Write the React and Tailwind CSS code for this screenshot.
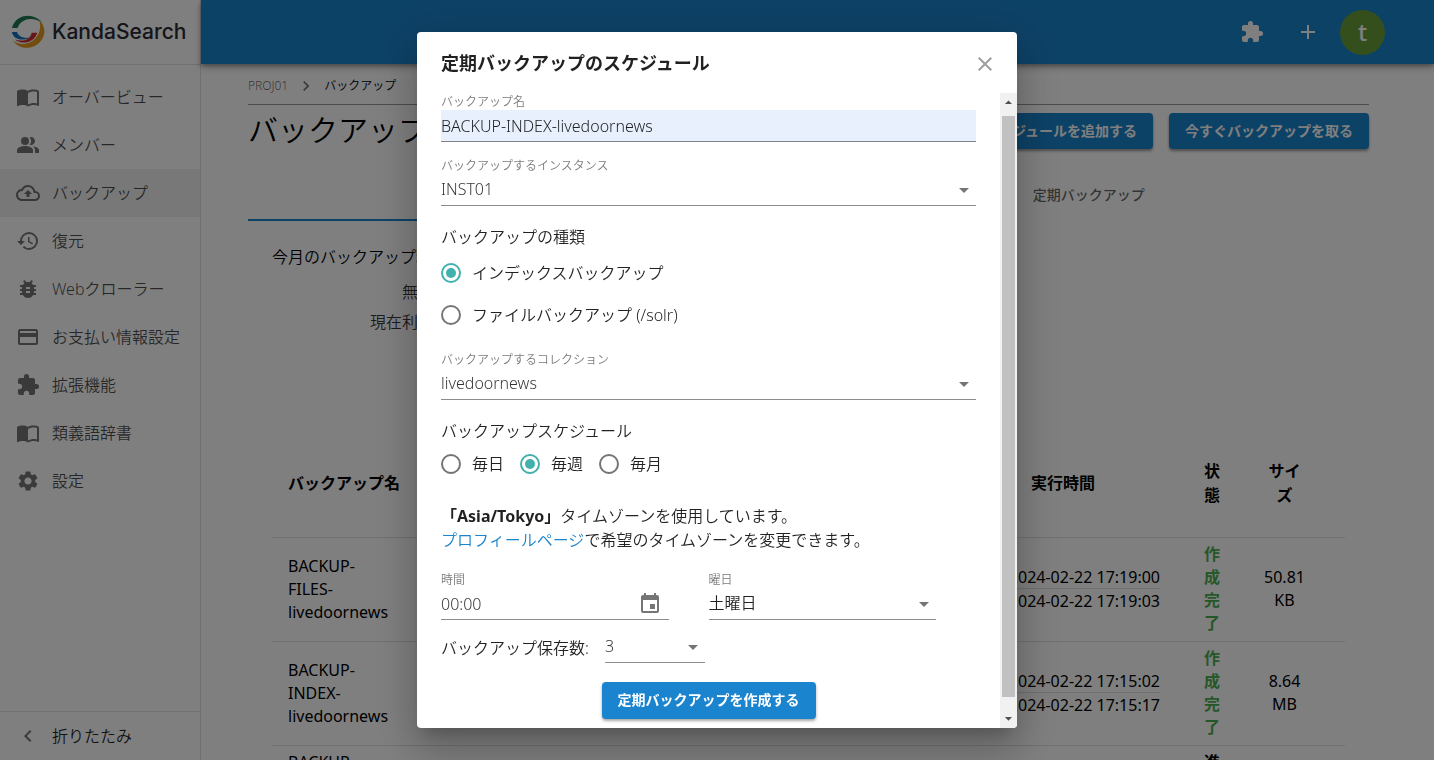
import React, { useState } from "react";
import {
  MdAdd,
  MdArrowDropDown,
  MdArrowDropUp,
  MdBugReport,
  MdChevronLeft,
  MdChevronRight,
  MdClose,
  MdCreditCard,
  MdEvent,
  MdExtension,
  MdHistory,
  MdImportContacts,
  MdOutlineBackup,
  MdPeopleAlt,
  MdSettings,
} from "react-icons/md";

const menuItems = [
  { label: "オーバービュー", icon: MdImportContacts },
  { label: "メンバー", icon: MdPeopleAlt },
  { label: "バックアップ", icon: MdOutlineBackup, active: true },
  { label: "復元", icon: MdHistory },
  { label: "Webクローラー", icon: MdBugReport },
  { label: "お支払い情報設定", icon: MdCreditCard },
  { label: "拡張機能", icon: MdExtension },
  { label: "類義語辞書", icon: MdImportContacts },
  { label: "設定", icon: MdSettings },
];

const backups = [
  {
    name: "BACKUP-FILES-livedoornews",
    type: "ファイル",
    start: "2024-02-22 17:19:00",
    end: "2024-02-22 17:19:03",
    status: "作成完了",
    size: "50.81 KB",
  },
  {
    name: "BACKUP-INDEX-livedoornews",
    type: "索引",
    start: "2024-02-22 17:15:02",
    end: "2024-02-22 17:15:17",
    status: "作成完了",
    size: "8.64 MB",
  },
  {
    name: "BACKUP-INDEX-livedoornews",
    type: "索引",
    start: "2024-02-22 17:14:10",
    end: "",
    status: "進行中",
    size: "",
  },
];

function Logo() {
  return (
    <a href="#" className="flex h-[65px] items-center gap-[7px] border-b border-black/12 pl-[11px]">
      <svg viewBox="0 0 34 34" className="size-[34px] shrink-0" aria-hidden="true">
        <path d="M1 13C3 4 12 -1 21 1.200C25 2.200 28.500 4.200 31 7.500C25 3.500 17 2.500 11.500 6.500C8.500 8.500 7.200 11 6.600 13Z" fill="#1f7a55" />
        <path d="M28 5C34.500 10.500 35.500 20 29 27C22 35 8 35 1.700 25.200C8 30.500 16 29.800 22 25.500C28 21 31 12 28 5Z" fill="#e39a1f" />
        <path d="M0.800 17L6 17C7.500 21.500 13 24 19 22.200C12.500 26.500 2.500 25 0.800 17Z" fill="#1670bd" />
        <path d="M26.300 17.700C24 26.500 12 31 4 24.500C11 27 19 25.500 20.700 17.700Z" fill="#cf2c35" />
      </svg>
      <span className="font-['Inter','Noto_Sans',sans-serif] text-[21px] font-medium text-[#2a2a35]">
        KandaSearch
      </span>
    </a>
  );
}

function Sidebar() {
  return (
    <aside className="flex w-[201px] shrink-0 flex-col border-r border-black/12 font-[350]">
      <Logo />
      <nav className="flex-1 py-2">
        {menuItems.map(({ label, icon: Icon, active }) => (
          <a
            key={label}
            href="#"
            className={`flex h-12 items-center gap-3 px-4 text-black/70 ${active ? "bg-black/6" : ""}`}
          >
            <Icon className="size-6 shrink-0 text-black/54" />
            {label}
          </a>
        ))}
      </nav>
      <button className="flex h-[49px] items-center gap-3 border-t border-black/12 px-4">
        <MdChevronLeft className="size-6 text-black/54" />
        折りたたみ
      </button>
    </aside>
  );
}

function Header() {
  return (
    <header className="flex h-16 shrink-0 items-center justify-end gap-2 bg-[#1b84ce] pr-[49px] text-white shadow-[0_2px_4px_rgba(0,0,0,0.3),0_4px_8px_rgba(0,0,0,0.2)]">
      <button className="grid size-12 place-items-center" aria-label="拡張機能">
        <MdExtension className="size-6" />
      </button>
      <button className="grid size-12 place-items-center" aria-label="追加">
        <MdAdd className="size-6" />
      </button>
      <button className="size-[45px] rounded-full bg-[#689f38] text-2xl font-medium">t</button>
    </header>
  );
}

function BackupTable() {
  return (
    <table className="w-full table-fixed text-center">
      <colgroup>
        <col className="w-[152px]" />
        <col />
        <col />
        <col className="w-[226px]" />
        <col className="w-[72px]" />
        <col className="w-[73px]" />
        <col className="w-6" />
      </colgroup>
      <thead>
        <tr className="h-[108px] border-b border-black/12">
          <th className="px-4 text-left">バックアップ名</th>
          <th className="px-4">インスタンス</th>
          <th className="px-4">種類</th>
          <th className="px-4">実行時間</th>
          <th className="px-7">状態</th>
          <th className="px-4">サイズ</th>
          <td />
        </tr>
      </thead>
      <tbody className="leading-[23px]">
        {backups.map((backup, i) => (
          <tr key={i} className="border-b border-black/12">
            <td className="pr-8 pl-4 text-left">{backup.name}</td>
            <td className="px-4">INST01</td>
            <td className="px-4">{backup.type}</td>
            <td className="px-4 text-right leading-6">
              <div className="h-6 border-b border-black/12">{backup.start}</div>
              <div>{backup.end}</div>
            </td>
            <td className={`px-7 pt-[5px] pb-1.5 font-bold ${backup.end ? "text-[#4caf50]" : ""}`}>{backup.status}</td>
            <td className="px-4">{backup.size}</td>
            <td />
          </tr>
        ))}
      </tbody>
    </table>
  );
}

function BackupPage() {
  const button =
    "h-9 rounded bg-[#1b84ce] px-4 text-sm font-bold text-white shadow-[0_2px_3px_rgba(0,0,0,0.4)]";

  return (
    <main className="pr-[65px] pl-[47px] text-black">
      <ol className="flex h-[41px] items-center gap-2 border-b border-black/40 pt-1 text-xs font-[350]">
        <li>
          <a href="#" className="text-black/60">PROJ01</a>
        </li>
        <li>
          <MdChevronRight className="size-5 text-black/54" />
        </li>
        <li>バックアップ</li>
      </ol>
      <div className="mt-2 flex h-9 items-center justify-between gap-4">
        <h1 className="pb-0.5 text-3xl font-[350]">バックアップ</h1>
        <div className="flex gap-4">
          <button className={button}>バックアップスケジュールを追加する</button>
          <button className={button}>今すぐバックアップを取る</button>
        </div>
      </div>
      <div role="tablist" className="mt-[23px] flex text-sm font-medium">
        <button role="tab" aria-selected="true" className="h-[49px] flex-1 border-b-2 border-[#1b84ce] pb-1 text-[#1b84ce]">
          バックアップ
        </button>
        <button role="tab" aria-selected="false" className="h-[49px] flex-1 pb-1 text-black/60">
          定期バックアップ
        </button>
      </div>
      <section className="p-6 font-[350]">
        <h2>今月のバックアップ料金</h2>
        <dl className="mt-[11px] grid grid-cols-[162px_1fr] gap-x-4 gap-y-1.5 text-black/80">
          <dt className="text-right">無料</dt>
          <dd>10 GB</dd>
          <dt className="text-right">現在利用</dt>
          <dd>0 GB</dd>
        </dl>
        <div className="mt-[95px] font-normal">
          <BackupTable />
        </div>
      </section>
    </main>
  );
}

function SelectField({ id, label, options, className = "", dark = false }) {
  return (
    <div className={className}>
      {label && (
        <label htmlFor={id} className="block text-xs leading-[17px] text-black/54">
          {label}
        </label>
      )}
      <div className="relative">
        <select
          id={id}
          aria-label={label ? undefined : "バックアップ保存数"}
          className={`block h-8 w-full appearance-none border-b border-black/45 pb-0.5 ${dark ? "" : "text-black/80"}`}
        >
          {options.map((option) => (
            <option key={option}>{option}</option>
          ))}
        </select>
        <MdArrowDropDown className="pointer-events-none absolute top-1 right-0 size-6 text-black/54" />
      </div>
    </div>
  );
}

function Radio({ name, label, checked, onChange }) {
  return (
    <label className="flex h-[42px] items-center gap-[11px]">
      <input
        type="radio"
        name={name}
        checked={checked}
        onChange={onChange}
        className="grid size-5 appearance-none place-content-center rounded-full border-2 border-black/54 before:size-2.5 before:rounded-full checked:border-[#41b0ae] checked:before:bg-[#41b0ae]"
      />
      {label}
    </label>
  );
}

function ScheduleDialog() {
  const [name, setName] = useState("BACKUP-INDEX-livedoornews");
  const [time, setTime] = useState("00:00");
  const [type, setType] = useState("インデックスバックアップ");
  const [schedule, setSchedule] = useState("毎週");

  return (
    <div
      role="dialog"
      aria-labelledby="dialog-title"
      className="flex h-full w-full max-w-[600px] flex-col overflow-hidden rounded bg-white font-[350] text-black/87 shadow-[0_11px_15px_-7px_rgba(0,0,0,0.2),0_24px_38px_3px_rgba(0,0,0,0.14),0_9px_46px_8px_rgba(0,0,0,0.12)]"
    >
      <div className="flex h-[61px] shrink-0 items-center justify-between pt-0.5 pr-5 pl-6">
        <h2 id="dialog-title" className="pb-0.5 text-lg font-bold">定期バックアップのスケジュール</h2>
        <button aria-label="閉じる">
          <MdClose className="size-6 text-[#9e9e9e]" />
        </button>
      </div>
      <div className="flex min-h-0 flex-1">
        <form className="flex-1 overflow-hidden px-6">
          <label htmlFor="backup-name" className="block text-xs leading-[17px] text-black/54">
            バックアップ名
          </label>
          <input
            id="backup-name"
            value={name}
            onChange={(e) => setName(e.target.value)}
            className="block h-8 w-full border-b border-black/45 bg-[#e8f0fe]"
          />
          <SelectField id="instance" label="バックアップするインスタンス" options={["INST01"]} className="mt-[15px]" />

          <fieldset className="mt-[19px]">
            <legend className="mb-[3px]">バックアップの種類</legend>
            {["インデックスバックアップ", "ファイルバックアップ (/solr)"].map((label) => (
              <Radio key={label} name="type" label={label} checked={type === label} onChange={() => setType(label)} />
            ))}
          </fieldset>
          <SelectField id="collection" label="バックアップするコレクション" options={["livedoornews"]} className="mt-[15px]" />

          <fieldset className="mt-[19px]">
            <legend>バックアップスケジュール</legend>
            <div className="flex gap-4">
              {["毎日", "毎週", "毎月"].map((label) => (
                <Radio key={label} name="schedule" label={label} checked={schedule === label} onChange={() => setSchedule(label)} />
              ))}
            </div>
          </fieldset>

          <p className="mt-[19px]">
            <b className="font-bold">「Asia/Tokyo」</b>タイムゾーンを使用しています。
            <br />
            <a href="#" className="text-[#1b84ce]">プロフィールページ</a>で希望のタイムゾーンを変更できます。
          </p>

          <div className="mt-[19px] grid grid-cols-2 gap-10 pr-10">
            <div>
              <label htmlFor="time" className="block text-xs leading-[17px] text-black/54">時間</label>
              <div className="flex h-8 items-center border-b border-black/45 pr-[7px]">
                <input
                  id="time"
                  value={time}
                  onChange={(e) => setTime(e.target.value)}
                  className="min-w-0 flex-1 text-black/80"
                />
                <MdEvent className="size-6 shrink-0 text-black/54" />
              </div>
            </div>
            <SelectField id="weekday" label="曜日" options={["土曜日"]} dark />
          </div>

          <div className="mt-[11px] flex items-center gap-4">
            <label htmlFor="keep" className="pt-0.5">バックアップ保存数:</label>
            <SelectField id="keep" options={["3", "5", "7"]} className="w-[100px]" />
          </div>

          <button
            type="button"
            className="mx-auto mt-[19px] block h-[37px] rounded bg-[#1b84ce] px-4 pb-0.5 text-sm font-bold text-white shadow-[0_2px_3px_rgba(0,0,0,0.35)]"
          >
            定期バックアップを作成する
          </button>
        </form>
        <div className="flex w-[17px] shrink-0 flex-col items-center bg-[#f1f1f1]" aria-hidden="true">
          <MdArrowDropUp className="mt-px mb-[5px] size-[17px] text-[#505050]" />
          <div className="w-[13px] flex-1 bg-[#c1c1c1]" />
          <MdArrowDropDown className="mt-[13px] mb-px size-[17px] text-[#505050]" />
        </div>
      </div>
    </div>
  );
}

export default function App() {
  return (
    <div className="h-screen overflow-hidden font-['Noto_Sans','Noto_Sans_CJK_JP',sans-serif] text-base text-black/87" lang="ja">
      <div className="flex h-full">
        <Sidebar />
        <div className="flex min-w-0 flex-1 flex-col">
          <Header />
          <BackupPage />
        </div>
      </div>
      <div className="fixed inset-0 flex justify-center bg-black/50 py-8">
        <ScheduleDialog />
      </div>
    </div>
  );
}
